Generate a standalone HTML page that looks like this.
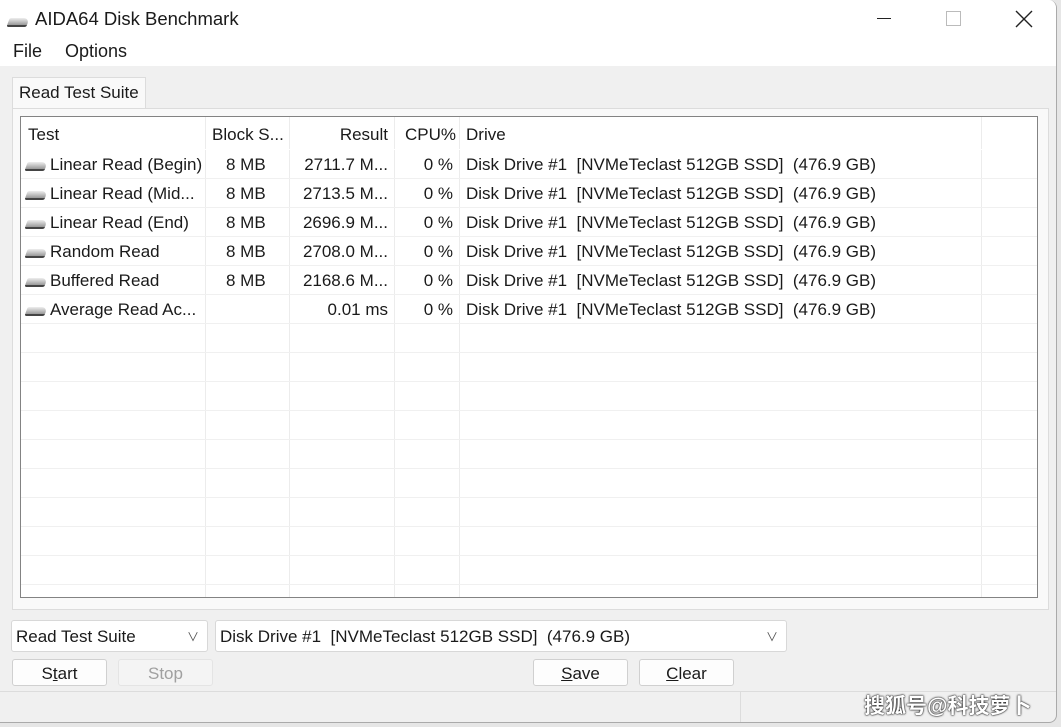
<!DOCTYPE html><html><head><style>
body{margin:0;width:1061px;height:727px;background:#e6e6e6;font-family:"Liberation Sans","Noto Sans CJK SC",sans-serif;color:#1a1a1a;overflow:hidden;position:relative}
.win{position:absolute;left:0;top:0;width:1056px;height:722px;background:#f0f0f0;border-right:1px solid #aaa;border-bottom:1px solid #aaa;border-radius:0 8px 8px 0;overflow:hidden}
.a{position:absolute;white-space:nowrap}
.top{position:absolute;left:0;top:0;width:1056px;height:66px;background:#fff}
.tab{position:absolute;left:12px;top:77px;width:132px;height:32px;background:#f9f9f9;border:1px solid #dcdcdc;border-bottom:none}
.panel{position:absolute;left:12px;top:108px;width:1035px;height:500px;background:#f9f9f9;border:1px solid #dcdcdc}
.tbl{position:absolute;left:20px;top:116px;width:1016px;height:480px;background:#fff;border:1px solid #838383;overflow:hidden}
.hl{position:absolute;left:0;width:1016px;height:1px;background:#f0f0f0}
.vl{position:absolute;top:0;width:1px;height:480px;background:#ececec}
.t{position:absolute;font-size:17px;white-space:nowrap}
.r{text-align:right}
.combo{position:absolute;top:620px;height:32px;background:#fff;border:1px solid #d8d8d8;border-radius:3px;font-size:17px;line-height:32px;padding-left:4px;box-sizing:border-box}
.btn{position:absolute;top:659px;width:95px;height:27px;background:#fdfdfd;border:1px solid #d0d0d0;border-radius:3px;font-size:17px;line-height:28px;text-align:center;box-sizing:border-box}
.ico{display:inline-block;width:20px;height:7px;background:linear-gradient(#eee,#999);border-radius:2px 6px 2px 2px;transform:skewX(-20deg);vertical-align:-1px;margin-right:4px;border-bottom:2px solid #444}
</style></head><body><div class="win">
<div class="top"></div>
<span class="ico" style="position:absolute;left:8px;top:18px"></span>
<div class="a" style="left:35px;top:8px;font-size:18.5px">AIDA64 Disk Benchmark</div>
<div class="a" style="left:877px;top:18px;width:14px;height:1px;background:#222"></div>
<div class="a" style="left:946px;top:11px;width:13px;height:13px;border:1px solid #bbb"></div>
<svg class="a" style="left:1015px;top:10px" width="18" height="18"><path d="M1 1L17 17M17 1L1 17" stroke="#222" stroke-width="1.4"/></svg>
<div class="a" style="left:13px;top:41px;font-size:18px">File</div>
<div class="a" style="left:65px;top:41px;font-size:18px">Options</div>
<div class="tab"></div><div class="panel"></div>
<div class="a" style="left:19px;top:83px;font-size:17px">Read Test Suite</div>
<div class="tbl">
<div class="vl" style="left:184px"></div><div class="vl" style="left:268px"></div><div class="vl" style="left:373px"></div><div class="vl" style="left:438px"></div><div class="vl" style="left:960px"></div>
<div class="hl" style="top:32px;background:#fff"></div>
<div class="hl" style="top:61px"></div><div class="hl" style="top:90px"></div><div class="hl" style="top:119px"></div><div class="hl" style="top:148px"></div><div class="hl" style="top:177px"></div><div class="hl" style="top:206px"></div><div class="hl" style="top:235px"></div><div class="hl" style="top:264px"></div><div class="hl" style="top:293px"></div><div class="hl" style="top:322px"></div><div class="hl" style="top:351px"></div><div class="hl" style="top:380px"></div><div class="hl" style="top:409px"></div><div class="hl" style="top:438px"></div><div class="hl" style="top:467px"></div>
<div class="t" style="left:7px;top:8px">Test</div><div class="t" style="left:191px;top:8px">Block S...</div><div class="t r" style="left:268px;width:99px;top:8px">Result</div><div class="t" style="left:384px;top:8px">CPU%</div><div class="t" style="left:445px;top:8px">Drive</div>
<div style="position:absolute;left:0;top:38px">
<div class="t" style="left:5px;top:0"><span class="ico"></span>Linear Read (Begin)</div>
<div class="t" style="left:5px;top:29px"><span class="ico"></span>Linear Read (Mid...</div>
<div class="t" style="left:5px;top:58px"><span class="ico"></span>Linear Read (End)</div>
<div class="t" style="left:5px;top:87px"><span class="ico"></span>Random Read</div>
<div class="t" style="left:5px;top:116px"><span class="ico"></span>Buffered Read</div>
<div class="t" style="left:5px;top:145px"><span class="ico"></span>Average Read Ac...</div>
<div class="t" style="left:205px;top:0">8 MB</div><div class="t" style="left:205px;top:29px">8 MB</div><div class="t" style="left:205px;top:58px">8 MB</div><div class="t" style="left:205px;top:87px">8 MB</div><div class="t" style="left:205px;top:116px">8 MB</div>
<div class="t r" style="left:268px;width:99px;top:0">2711.7 M...</div><div class="t r" style="left:268px;width:99px;top:29px">2713.5 M...</div><div class="t r" style="left:268px;width:99px;top:58px">2696.9 M...</div><div class="t r" style="left:268px;width:99px;top:87px">2708.0 M...</div><div class="t r" style="left:268px;width:99px;top:116px">2168.6 M...</div><div class="t r" style="left:268px;width:99px;top:145px">0.01 ms</div>
<div class="t r" style="left:373px;width:59px;top:0">0 %</div><div class="t r" style="left:373px;width:59px;top:29px">0 %</div><div class="t r" style="left:373px;width:59px;top:58px">0 %</div><div class="t r" style="left:373px;width:59px;top:87px">0 %</div><div class="t r" style="left:373px;width:59px;top:116px">0 %</div><div class="t r" style="left:373px;width:59px;top:145px">0 %</div>
<div class="t" style="left:445px;top:0">Disk Drive #1&nbsp; [NVMeTeclast 512GB SSD]&nbsp; (476.9 GB)</div>
<div class="t" style="left:445px;top:29px">Disk Drive #1&nbsp; [NVMeTeclast 512GB SSD]&nbsp; (476.9 GB)</div>
<div class="t" style="left:445px;top:58px">Disk Drive #1&nbsp; [NVMeTeclast 512GB SSD]&nbsp; (476.9 GB)</div>
<div class="t" style="left:445px;top:87px">Disk Drive #1&nbsp; [NVMeTeclast 512GB SSD]&nbsp; (476.9 GB)</div>
<div class="t" style="left:445px;top:116px">Disk Drive #1&nbsp; [NVMeTeclast 512GB SSD]&nbsp; (476.9 GB)</div>
<div class="t" style="left:445px;top:145px">Disk Drive #1&nbsp; [NVMeTeclast 512GB SSD]&nbsp; (476.9 GB)</div>
</div></div>
<div class="combo" style="left:11px;width:197px">Read Test Suite<span style="position:absolute;right:8px;font-size:12px;color:#555">&#8744;</span></div>
<div class="combo" style="left:215px;width:572px">Disk Drive #1&nbsp; [NVMeTeclast 512GB SSD]&nbsp; (476.9 GB)<span style="position:absolute;right:8px;font-size:12px;color:#555">&#8744;</span></div>
<div class="btn" style="left:12px">S<u>t</u>art</div>
<div class="btn" style="left:118px;color:#a0a0a0;background:#f4f4f4;border-color:#e4e4e4">Stop</div>
<div class="btn" style="left:533px"><u>S</u>ave</div>
<div class="btn" style="left:639px"><u>C</u>lear</div>
<div class="a" style="left:0;top:691px;width:1056px;height:1px;background:#dcdcdc"></div>
<div class="a" style="left:740px;top:692px;width:1px;height:30px;background:#dcdcdc"></div>
<div class="a" style="left:864px;top:690px;font-size:21px;color:#fff;font-weight:bold;text-shadow:0 0 2px #000,0 0 1px #000">搜狐号@科技萝卜</div>
</div></body></html>
